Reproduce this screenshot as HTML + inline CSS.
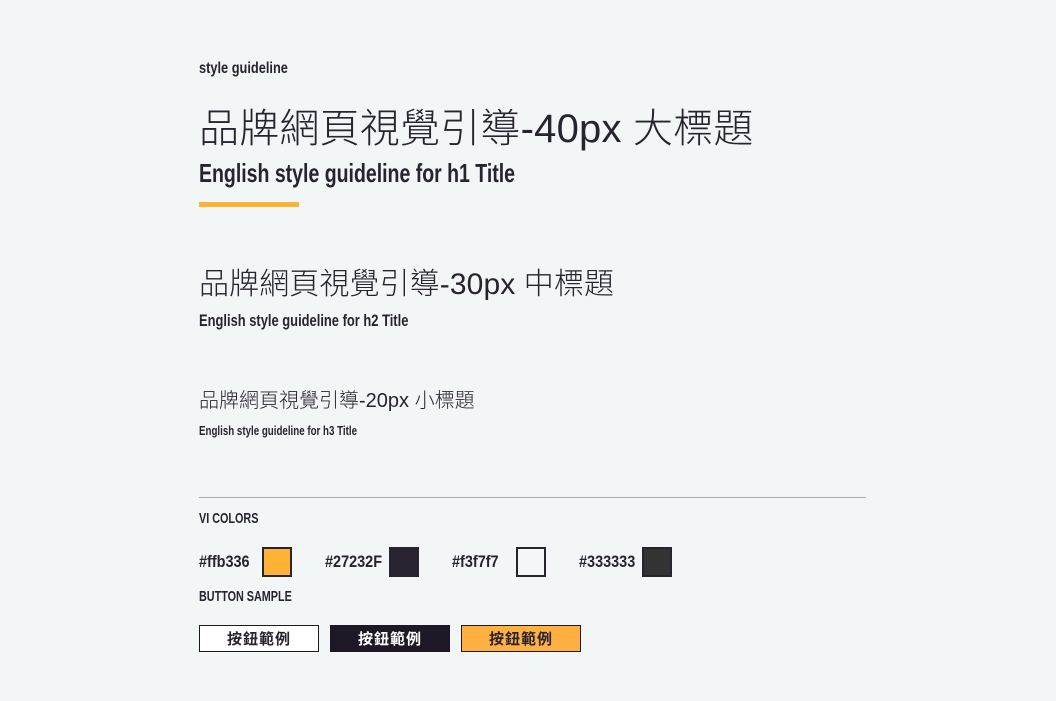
<!DOCTYPE html>
<html><head><meta charset="utf-8"><style>
body{margin:0;background:#f3f6f7;width:1056px;height:701px;position:relative;overflow:hidden;color:#27232F;font-family:"Liberation Sans","Noto Sans CJK TC",sans-serif}
.a{position:absolute;white-space:nowrap;line-height:1}
.n{font-family:"Liberation Sans",sans-serif;font-weight:bold;transform:scaleX(.72);transform-origin:left center;display:inline-block}
.cjk{font-family:"Liberation Sans","Noto Sans CJK TC",sans-serif;font-weight:300}
.sw{position:absolute;top:547px;width:26px;height:26px;border:2px solid #27232F}
.btn{position:absolute;top:625px;width:118px;height:25px;border:1px solid #1e1826;font-family:"Noto Sans CJK TC",sans-serif;font-weight:bold;font-size:15px;text-align:center;line-height:25px;letter-spacing:1px}
</style></head><body>
<div class="a n" style="left:199px;top:61px;font-size:16px;transform:scaleX(.8)">style guideline</div>
<div class="a cjk" style="left:199px;top:109px;font-size:40px;letter-spacing:.2px">品牌網頁視覺引導-40px 大標題</div>
<div class="a n" style="left:199px;top:160px;font-size:26px;transform:scaleX(.75)">English style guideline for h1 Title</div>
<div class="a" style="left:199px;top:202px;width:100px;height:5px;background:#ffb336"></div>
<div class="a cjk" style="left:199px;top:270px;font-size:30px;letter-spacing:.1px">品牌網頁視覺引導-30px 中標題</div>
<div class="a n" style="left:199px;top:312px;font-size:17px;transform:scaleX(.76)">English style guideline for h2 Title</div>
<div class="a cjk" style="left:199px;top:391px;font-size:20px">品牌網頁視覺引導-20px 小標題</div>
<div class="a n" style="left:199px;top:424px;font-size:13px;transform:scaleX(.75)">English style guideline for h3 Title</div>
<div class="a" style="left:199px;top:497px;width:667px;height:1px;background:#aaa"></div>
<div class="a n" style="left:199px;top:511px;font-size:15px">VI COLORS</div>
<div class="a n" style="left:199px;top:553px;font-size:17px;transform:scaleX(.85)">#ffb336</div>
<div class="sw" style="left:262px;background:#ffb336"></div>
<div class="a n" style="left:325px;top:553px;font-size:17px;transform:scaleX(.85)">#27232F</div>
<div class="sw" style="left:389px;background:#27232F"></div>
<div class="a n" style="left:452px;top:553px;font-size:17px;transform:scaleX(.85)">#f3f7f7</div>
<div class="sw" style="left:516px;background:#f3f7f7"></div>
<div class="a n" style="left:579px;top:553px;font-size:17px;transform:scaleX(.85)">#333333</div>
<div class="sw" style="left:642px;background:#333"></div>
<div class="a n" style="left:199px;top:589px;font-size:15px">BUTTON SAMPLE</div>
<div class="btn" style="left:199px;background:#fff">按鈕範例</div>
<div class="btn" style="left:330px;background:#1e1826;color:#fff">按鈕範例</div>
<div class="btn" style="left:461px;background:#ffb040">按鈕範例</div>
</body></html>
